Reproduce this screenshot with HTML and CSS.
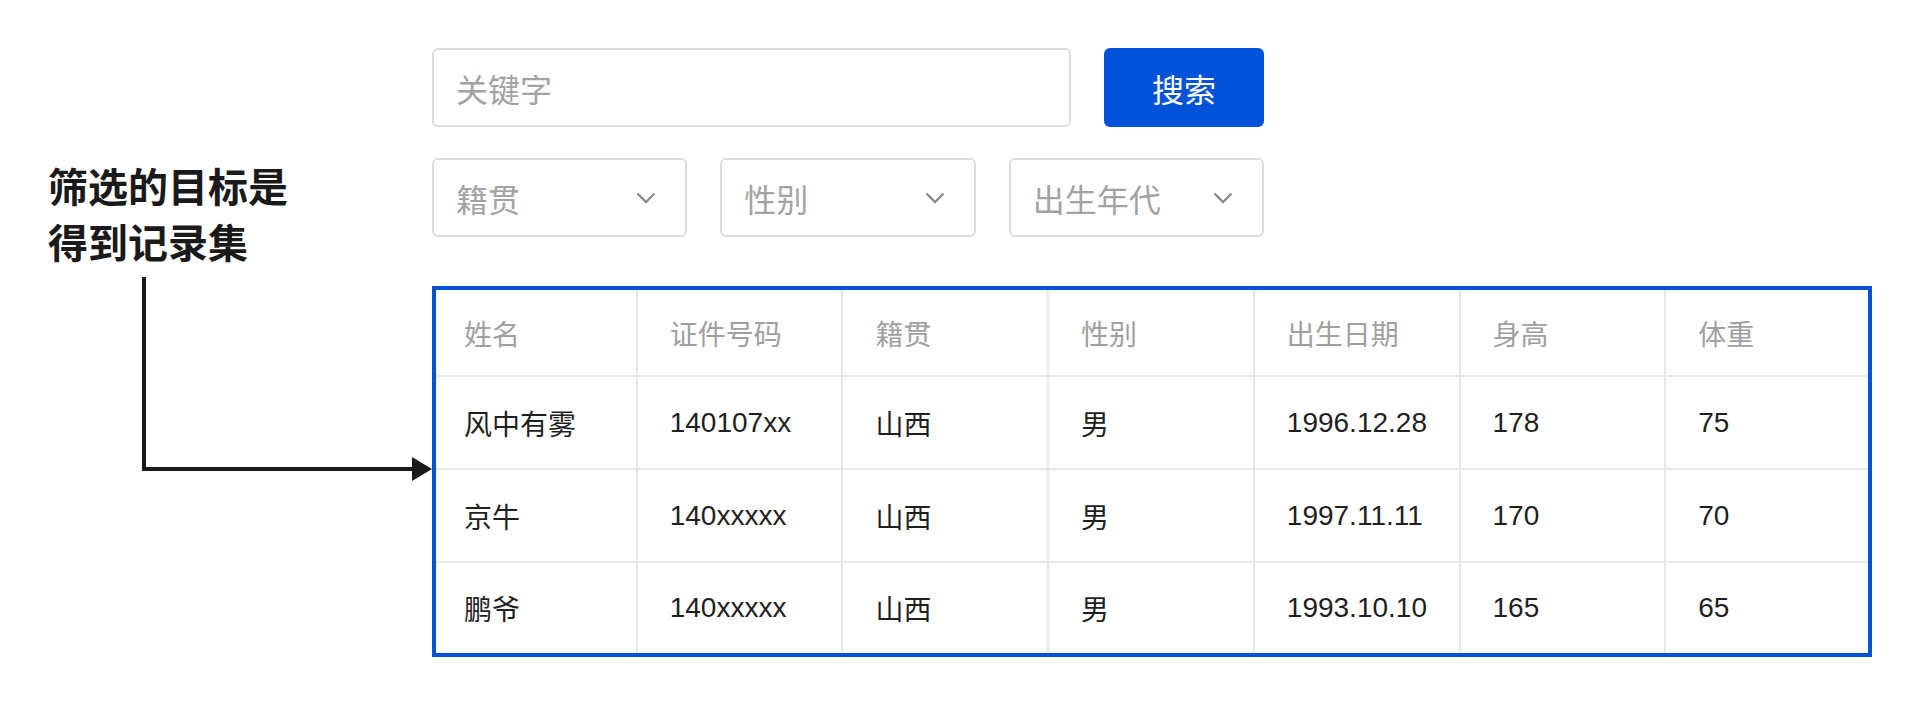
FILE: index.html
```html
<!DOCTYPE html>
<html lang="zh-CN">
<head>
<meta charset="utf-8">
<title>筛选</title>
<link rel="stylesheet" href="styles.css">
</head>
<body>
<div class="page">
  <aside class="note">
    <div class="note-text">筛选的目标是<br>得到记录集</div>
    <svg class="arrow" width="290" height="204" viewBox="0 0 290 204">
      <polyline points="2,0 2,192 272,192" fill="none" stroke="#1a1a1a" stroke-width="4" stroke-linejoin="miter" stroke-linecap="butt"/>
      <polygon points="270,180 290,192 270,204" fill="#1a1a1a"/>
    </svg>
  </aside>
  <main class="main">
    <div class="filters">
      <div class="search-row">
        <div class="field"><span class="placeholder">关键字</span></div>
        <button class="btn" type="button">搜索</button>
      </div>
      <div class="select-row">
        <div class="field select"><span class="placeholder">籍贯</span>
          <svg class="chev" width="20" height="12" viewBox="0 0 20 12"><polyline points="1.5,1.5 10,10 18.5,1.5" fill="none" stroke="#8c8c8c" stroke-width="2.4"/></svg>
        </div>
        <div class="field select"><span class="placeholder">性别</span>
          <svg class="chev" width="20" height="12" viewBox="0 0 20 12"><polyline points="1.5,1.5 10,10 18.5,1.5" fill="none" stroke="#8c8c8c" stroke-width="2.4"/></svg>
        </div>
        <div class="field select"><span class="placeholder">出生年代</span>
          <svg class="chev" width="20" height="12" viewBox="0 0 20 12"><polyline points="1.5,1.5 10,10 18.5,1.5" fill="none" stroke="#8c8c8c" stroke-width="2.4"/></svg>
        </div>
      </div>
    </div>
    <table class="records">
      <thead>
        <tr><th>姓名</th><th>证件号码</th><th>籍贯</th><th>性别</th><th>出生日期</th><th>身高</th><th>体重</th></tr>
      </thead>
      <tbody>
        <tr><td>风中有雾</td><td>140107xx</td><td>山西</td><td>男</td><td>1996.12.28</td><td>178</td><td>75</td></tr>
        <tr><td>京牛</td><td>140xxxxx</td><td>山西</td><td>男</td><td>1997.11.11</td><td>170</td><td>70</td></tr>
        <tr><td>鹏爷</td><td>140xxxxx</td><td>山西</td><td>男</td><td>1993.10.10</td><td>165</td><td>65</td></tr>
      </tbody>
    </table>
  </main>
</div>
</body>
</html>
```
FILE: styles.css
```css
* { box-sizing: border-box; }
html, body { margin: 0; padding: 0; background: #ffffff; }
body {
  font-family: "Liberation Sans", "Noto Sans CJK SC", sans-serif;
  color: #1f1f1f;
}
.page {
  display: flex;
  padding-top: 48px;
}
.note {
  flex: none;
  width: 432px;
  padding-top: 109px;
}
.note-text {
  margin-left: 48px;
  font-family: "Noto Sans CJK SC", sans-serif;
  font-weight: 700;
  font-size: 40px;
  line-height: 56px;
  color: #1a1a1a;
}
.arrow {
  display: block;
  margin-left: 142px;
  margin-top: 8px;
}
.main {
  flex: none;
  width: 1440px;
}
.filters {
  width: 832px;
}
.search-row {
  display: grid;
  grid-template-columns: 1fr 160px;
  gap: 33px;
  height: 79px;
}
.select-row {
  display: grid;
  grid-template-columns: repeat(3, 1fr);
  gap: 33px;
  height: 79px;
  margin-top: 31px;
}
.field {
  display: flex;
  align-items: center;
  border: 2px solid #dcdcdc;
  border-radius: 6px;
  padding: 0 29px 0 22px;
  font-size: 32px;
}
.placeholder {
  color: #a3a3a3;
  font-family: "Noto Sans CJK SC", sans-serif;
}
.select {
  justify-content: space-between;
}
.chev { display: block; }
.btn {
  border: none;
  border-radius: 6px;
  background: #0052d9;
  color: #ffffff;
  font-family: "Noto Sans CJK SC", sans-serif;
  font-size: 32px;
  padding: 0;
}
.records {
  margin-top: 49px;
  width: 1440px;
  table-layout: fixed;
  border-collapse: separate;
  border-spacing: 0;
  outline: 4px solid #0052d9;
  outline-offset: -4px;
  font-size: 28px;
}
.records th, .records td {
  text-align: left;
  font-weight: 400;
  padding: 0 0 0 32px;
  border-right: 2px solid #e7e7e7;
  border-bottom: 2px solid #e7e7e7;
  white-space: nowrap;
}
.records th:last-child, .records td:last-child { border-right: none; }
.records tbody tr:last-child td { border-bottom: none; }
.records th {
  height: 91px;
  padding-top: 4px;
  color: #a0a0a0;
}
.records td {
  height: 93px;
  color: #1f1f1f;
}
.records tbody tr:last-child td { height: 94px; padding-bottom: 4px; }
```
